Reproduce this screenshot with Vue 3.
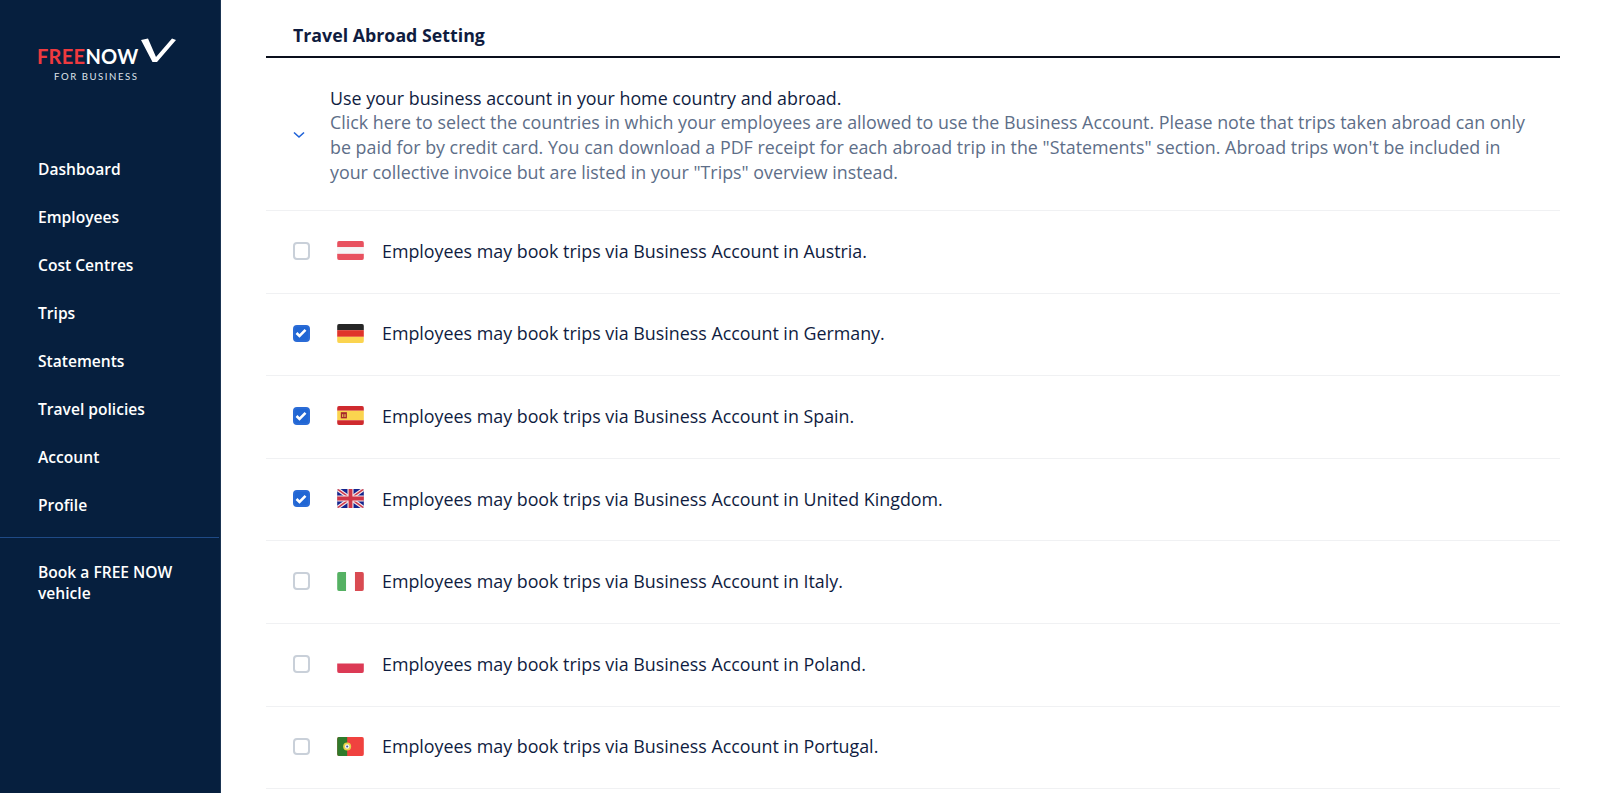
<script setup>
const navItems = ['Dashboard', 'Employees', 'Cost Centres', 'Trips', 'Statements', 'Travel policies', 'Account', 'Profile']

const countries = [
  { name: 'Austria', flag: 'at', checked: false },
  { name: 'Germany', flag: 'de', checked: true },
  { name: 'Spain', flag: 'es', checked: true },
  { name: 'United Kingdom', flag: 'gb', checked: true },
  { name: 'Italy', flag: 'it', checked: false },
  { name: 'Poland', flag: 'pl', checked: false },
  { name: 'Portugal', flag: 'pt', checked: false }
]
</script>

<template>
  <div class="page">
    <aside class="sidebar">
      <div class="logo">
        <div class="logoMark">
          <span class="free">FREE</span><span class="now">NOW</span>
          <svg class="tick" width="36" height="25" viewBox="0 0 36 25">
            <path d="M0 2 L7 0.5 L15 19 L31 0.5 L35 2 L16 24 L11.5 24 Z" fill="#fff" />
          </svg>
        </div>
        <div class="forBusiness">FOR BUSINESS</div>
      </div>
      <nav class="nav">
        <a v-for="item in navItems" :key="item" class="navItem">{{ item }}</a>
      </nav>
      <div class="navDivider"></div>
      <a class="navBook">Book a FREE NOW vehicle</a>
    </aside>

    <main class="content">
      <h2 class="title">Travel Abroad Setting</h2>

      <section class="intro">
        <svg class="chevron" width="12" height="8" viewBox="0 0 12 8">
          <path d="M1 1.5 L6 6 L11 1.5" fill="none" stroke="#1f62d8" stroke-width="1.6" />
        </svg>
        <div class="introText">
          <div class="introHead">Use your business account in your home country and abroad.</div>
          <div class="introBody">Click here to select the countries in which your employees are allowed to use the Business Account. Please note that trips taken abroad can only be paid for by credit card. You can download a PDF receipt for each abroad trip in the "Statements" section. Abroad trips won't be included in your collective invoice but are listed in your "Trips" overview instead.</div>
        </div>
      </section>

      <div v-for="c in countries" :key="c.name" class="row">
        <span class="checkbox" :class="{ checked: c.checked }">
          <svg v-if="c.checked" width="12" height="10" viewBox="0 0 12 10">
            <path d="M1.5 5 L4.5 8 L10.5 1.8" fill="none" stroke="#fff" stroke-width="2.6" />
          </svg>
        </span>

        <svg class="flag" width="27" height="19" viewBox="0 0 28 20">
          <g v-if="c.flag === 'at'">
            <rect width="28" height="6.5" fill="#e8515f" />
            <rect y="6.5" width="28" height="7" fill="#f5f5f6" />
            <rect y="13.5" width="28" height="6.5" fill="#e8515f" />
          </g>
          <g v-else-if="c.flag === 'de'">
            <rect width="28" height="6.5" fill="#262626" />
            <rect y="6.5" width="28" height="7" fill="#e0342a" />
            <rect y="13.5" width="28" height="6.5" fill="#fbd44f" />
          </g>
          <g v-else-if="c.flag === 'es'">
            <rect width="28" height="5" fill="#cf2a2e" />
            <rect y="5" width="28" height="10" fill="#fbd44f" />
            <rect y="15" width="28" height="5" fill="#cf2a2e" />
            <rect x="3.8" y="6.5" width="6.4" height="6.5" fill="#a8262a" />
            <rect x="5.2" y="8.6" width="1.2" height="3" fill="#e9c65a" />
            <rect x="7.6" y="8.6" width="1.2" height="3" fill="#e9c65a" />
          </g>
          <g v-else-if="c.flag === 'gb'">
            <rect width="28" height="20" fill="#14258e" />
            <path d="M0 0 L28 20 M28 0 L0 20" stroke="#f3e6e8" stroke-width="4" />
            <path d="M0 0 L28 20 M28 0 L0 20" stroke="#d0384a" stroke-width="1.6" />
            <path d="M14 0 V20 M0 10 H28" stroke="#f3e6e8" stroke-width="6.4" />
            <path d="M14 0 V20 M0 10 H28" stroke="#cf3547" stroke-width="4" />
          </g>
          <g v-else-if="c.flag === 'it'">
            <rect width="9.3" height="20" fill="#55b163" />
            <rect x="18.7" width="9.3" height="20" fill="#d94b52" />
          </g>
          <g v-else-if="c.flag === 'pl'">
            <rect y="10" width="28" height="10" fill="#dc3a55" />
          </g>
          <g v-else-if="c.flag === 'pt'">
            <rect width="28" height="20" fill="#f0423f" />
            <rect width="10.5" height="20" fill="#2f7a2b" />
            <circle cx="10.5" cy="10" r="4.2" fill="#e8d24a" />
            <circle cx="10.5" cy="10" r="2.4" fill="#f4f4f4" />
            <circle cx="10.5" cy="10" r="1.1" fill="#3a56a8" />
          </g>
        </svg>

        <span class="rowLabel">Employees may book trips via Business Account in {{ c.name }}.</span>
      </div>
    </main>
  </div>
</template>

<style>
body {
  margin: 0;
  overflow: hidden;
  background: #fff;
}
</style>

<style scoped>
.page {
  display: flex;
  height: 793px;
  overflow: hidden;
  font-family: "Open Sans", sans-serif;
  color: #0f1c3f;
}
.sidebar {
  width: 220px;
  flex-shrink: 0;
  background: #061f3e;
  border-right: 1px solid #1b3554;
  color: #fff;
}
.logo {
  padding: 26px 0 0 37px;
  height: 121px;
  box-sizing: border-box;
}
.logoMark {
  position: relative;
  font-family: "Lato", sans-serif;
  font-size: 20px;
  line-height: 24px;
  margin-top: 18px;
  letter-spacing: 0.3px;
}
.free {
  color: #ee3a3f;
  font-weight: 700;
}
.now {
  color: #fff;
  font-weight: 700;
}
.tick {
  position: absolute;
  left: 104px;
  top: -6px;
}
.forBusiness {
  font-family: "Lato", sans-serif;
  font-size: 9.6px;
  line-height: 12px;
  letter-spacing: 1.55px;
  margin: 3px 0 0 17px;
  color: #dfe3ea;
}
.nav {
  display: flex;
  flex-direction: column;
  padding-top: 24px;
  padding-bottom: 8px;
}
.navItem {
  height: 48px;
  line-height: 48px;
  padding-left: 38px;
  font-size: 15.6px;
  font-weight: 600;
}
.navDivider {
  height: 1px;
  width: 219px;
  background: #1f4a86;
}
.navBook {
  display: block;
  padding: 24px 30px 0 38px;
  font-size: 15.6px;
  font-weight: 600;
  line-height: 21px;
}
.content {
  flex: 1;
  padding: 0 40px 0 45px;
  min-width: 0;
}
.title {
  margin: 0;
  height: 58px;
  box-sizing: border-box;
  padding: 23px 0 0 27px;
  font-size: 17.8px;
  line-height: 24px;
  font-weight: 700;
  border-bottom: 2px solid #0a0f1c;
}
.intro {
  display: flex;
  align-items: center;
  height: 153px;
  box-sizing: border-box;
  border-bottom: 1px solid #f0f1f3;
  padding: 2px 26px 0 27px;
}
.chevron {
  flex-shrink: 0;
  margin: 0 25px 0 0;
}
.introText {
  font-size: 17.85px;
  line-height: 24.6px;
}
.introHead {
  color: #0f1c3f;
}
.introBody {
  color: #5d6e88;
}
.row {
  display: flex;
  align-items: center;
  height: 82.6px;
  box-sizing: border-box;
  border-bottom: 1px solid #f0f1f3;
  padding: 0 0 2px 26.5px;
}
.checkbox {
  width: 17.5px;
  height: 17.5px;
  box-sizing: border-box;
  border: 2px solid #c9d0d9;
  border-radius: 4px;
  margin-right: 27px;
  display: flex;
  align-items: center;
  justify-content: center;
  flex-shrink: 0;
}
.checkbox.checked {
  background: #2066d4;
  border-color: #2a6bd6;
}
.flag {
  flex-shrink: 0;
  margin-right: 18px;
  border-radius: 2px;
}
.rowLabel {
  font-size: 17.85px;
}
</style>
